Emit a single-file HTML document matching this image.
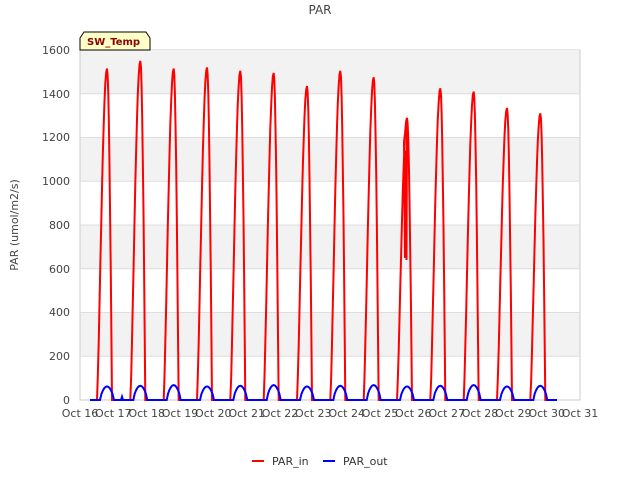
<!DOCTYPE html>
<html><head><meta charset="utf-8"><style>
body{margin:0;background:#fff;}
svg{display:block;font-family:"DejaVu Sans","Liberation Sans",sans-serif;}
</style></head><body>
<svg id="s" width="640" height="480" xmlns="http://www.w3.org/2000/svg">
<rect width="640" height="480" fill="#fff"/>
<rect x="80" y="50" width="500" height="350" fill="#fff" stroke="#ccc" stroke-width="1"/>
<g fill="#f2f2f2">
<rect x="80.5" y="50" width="499" height="43.75"/>
<rect x="80.5" y="137.5" width="499" height="43.75"/>
<rect x="80.5" y="225" width="499" height="43.75"/>
<rect x="80.5" y="312.5" width="499" height="43.75"/>
</g>
<g stroke="#ddd" stroke-width="1">
<line x1="80" x2="580" y1="93.75" y2="93.75"/>
<line x1="80" x2="580" y1="137.5" y2="137.5"/>
<line x1="80" x2="580" y1="181.25" y2="181.25"/>
<line x1="80" x2="580" y1="225" y2="225"/>
<line x1="80" x2="580" y1="268.75" y2="268.75"/>
<line x1="80" x2="580" y1="312.5" y2="312.5"/>
<line x1="80" x2="580" y1="356.25" y2="356.25"/>
</g>
<g font-size="11" fill="#444" text-anchor="end">
<text x="70" y="54">1600</text><text x="70" y="98">1400</text><text x="70" y="141">1200</text>
<text x="70" y="185">1000</text><text x="70" y="229">800</text><text x="70" y="273">600</text>
<text x="70" y="316">400</text><text x="70" y="360">200</text><text x="70" y="404">0</text>
</g>
<g id="xl" font-size="11" fill="#444" text-anchor="middle"></g>
<text x="320" y="14" font-size="12" fill="#444" text-anchor="middle">PAR</text>
<text transform="translate(18,225) rotate(-90)" font-size="11" fill="#444" text-anchor="middle">PAR (umol/m2/s)</text>
<path id="red" fill="none" stroke="#f00" stroke-width="2"/>
<path id="blue" fill="none" stroke="#00f" stroke-width="2"/>
<path d="M80 38 L84 32 L146 32 L150 38 L150 50 L80 50 Z" fill="#ffffc8" stroke="#000" stroke-width="1"/>
<text x="87" y="45" font-size="10" font-weight="bold" fill="#8b0000">SW_Temp</text>
<line x1="252" x2="264" y1="461" y2="461" stroke="#f00" stroke-width="2"/>
<text x="272" y="465" font-size="11" fill="#333">PAR_in</text>
<line x1="323" x2="335" y1="461" y2="461" stroke="#00f" stroke-width="2"/>
<text x="343" y="465" font-size="11" fill="#333">PAR_out</text>
</svg>
<script>
var dx=500/15,Y=function(v){return 400-v*350/1600;};
var xl=document.getElementById('xl'),h='';
for(var i=0;i<16;i++){h+='<text x="'+(80+i*dx).toFixed(1)+'" y="417">Oct '+(16+i)+'</text>';}
xl.innerHTML=h;
var pk=[1515,1550,1515,1520,1505,1495,1435,1505,1475,1290,1425,1410,1335,1310];
var r='M90 '+Y(0),b='M90 '+Y(0);
for(var d=0;d<14;d++){
 var o=80+d*dx,s=o+17,p=o+27,e=o+32,P=pk[d];
 r+=' L'+s.toFixed(1)+' 400';
 for(var k=1;k<=12;k++){var u=k/12;r+=' L'+(s+u*(p-s)).toFixed(1)+' '+Y(P*Math.pow(Math.sin(u*Math.PI/2),1.3)).toFixed(1);}
 if(d==9){r+=' L'+(p-3)+' '+Y(1180)+' L'+(p-2)+' '+Y(650)+' L'+(p-1)+' '+Y(1140)+' L'+(p-0.5)+' '+Y(640)+' L'+p+' '+Y(1290);}
 for(var k=1;k<=8;k++){var u=k/8;r+=' L'+(p+u*(e-p)).toFixed(1)+' '+Y(P*Math.pow(Math.cos(u*Math.PI/2),1.0)).toFixed(1);}
 var bs=o+20,be=o+34,bp=62+(d%3)*3;
 b+=' L'+bs.toFixed(1)+' 400';
 for(var k=1;k<=10;k++){var u=k/10;b+=' L'+(bs+u*(be-bs)).toFixed(1)+' '+Y(bp*Math.pow(Math.sin(u*Math.PI),0.7)).toFixed(1);}
 if(d==0){b+=' L121 400 L122 '+Y(15)+' L123 400';}
}
r+=' L557 400';b+=' L557 400';
document.getElementById('red').setAttribute('d',r);
document.getElementById('blue').setAttribute('d',b);
</script>
</body></html>
